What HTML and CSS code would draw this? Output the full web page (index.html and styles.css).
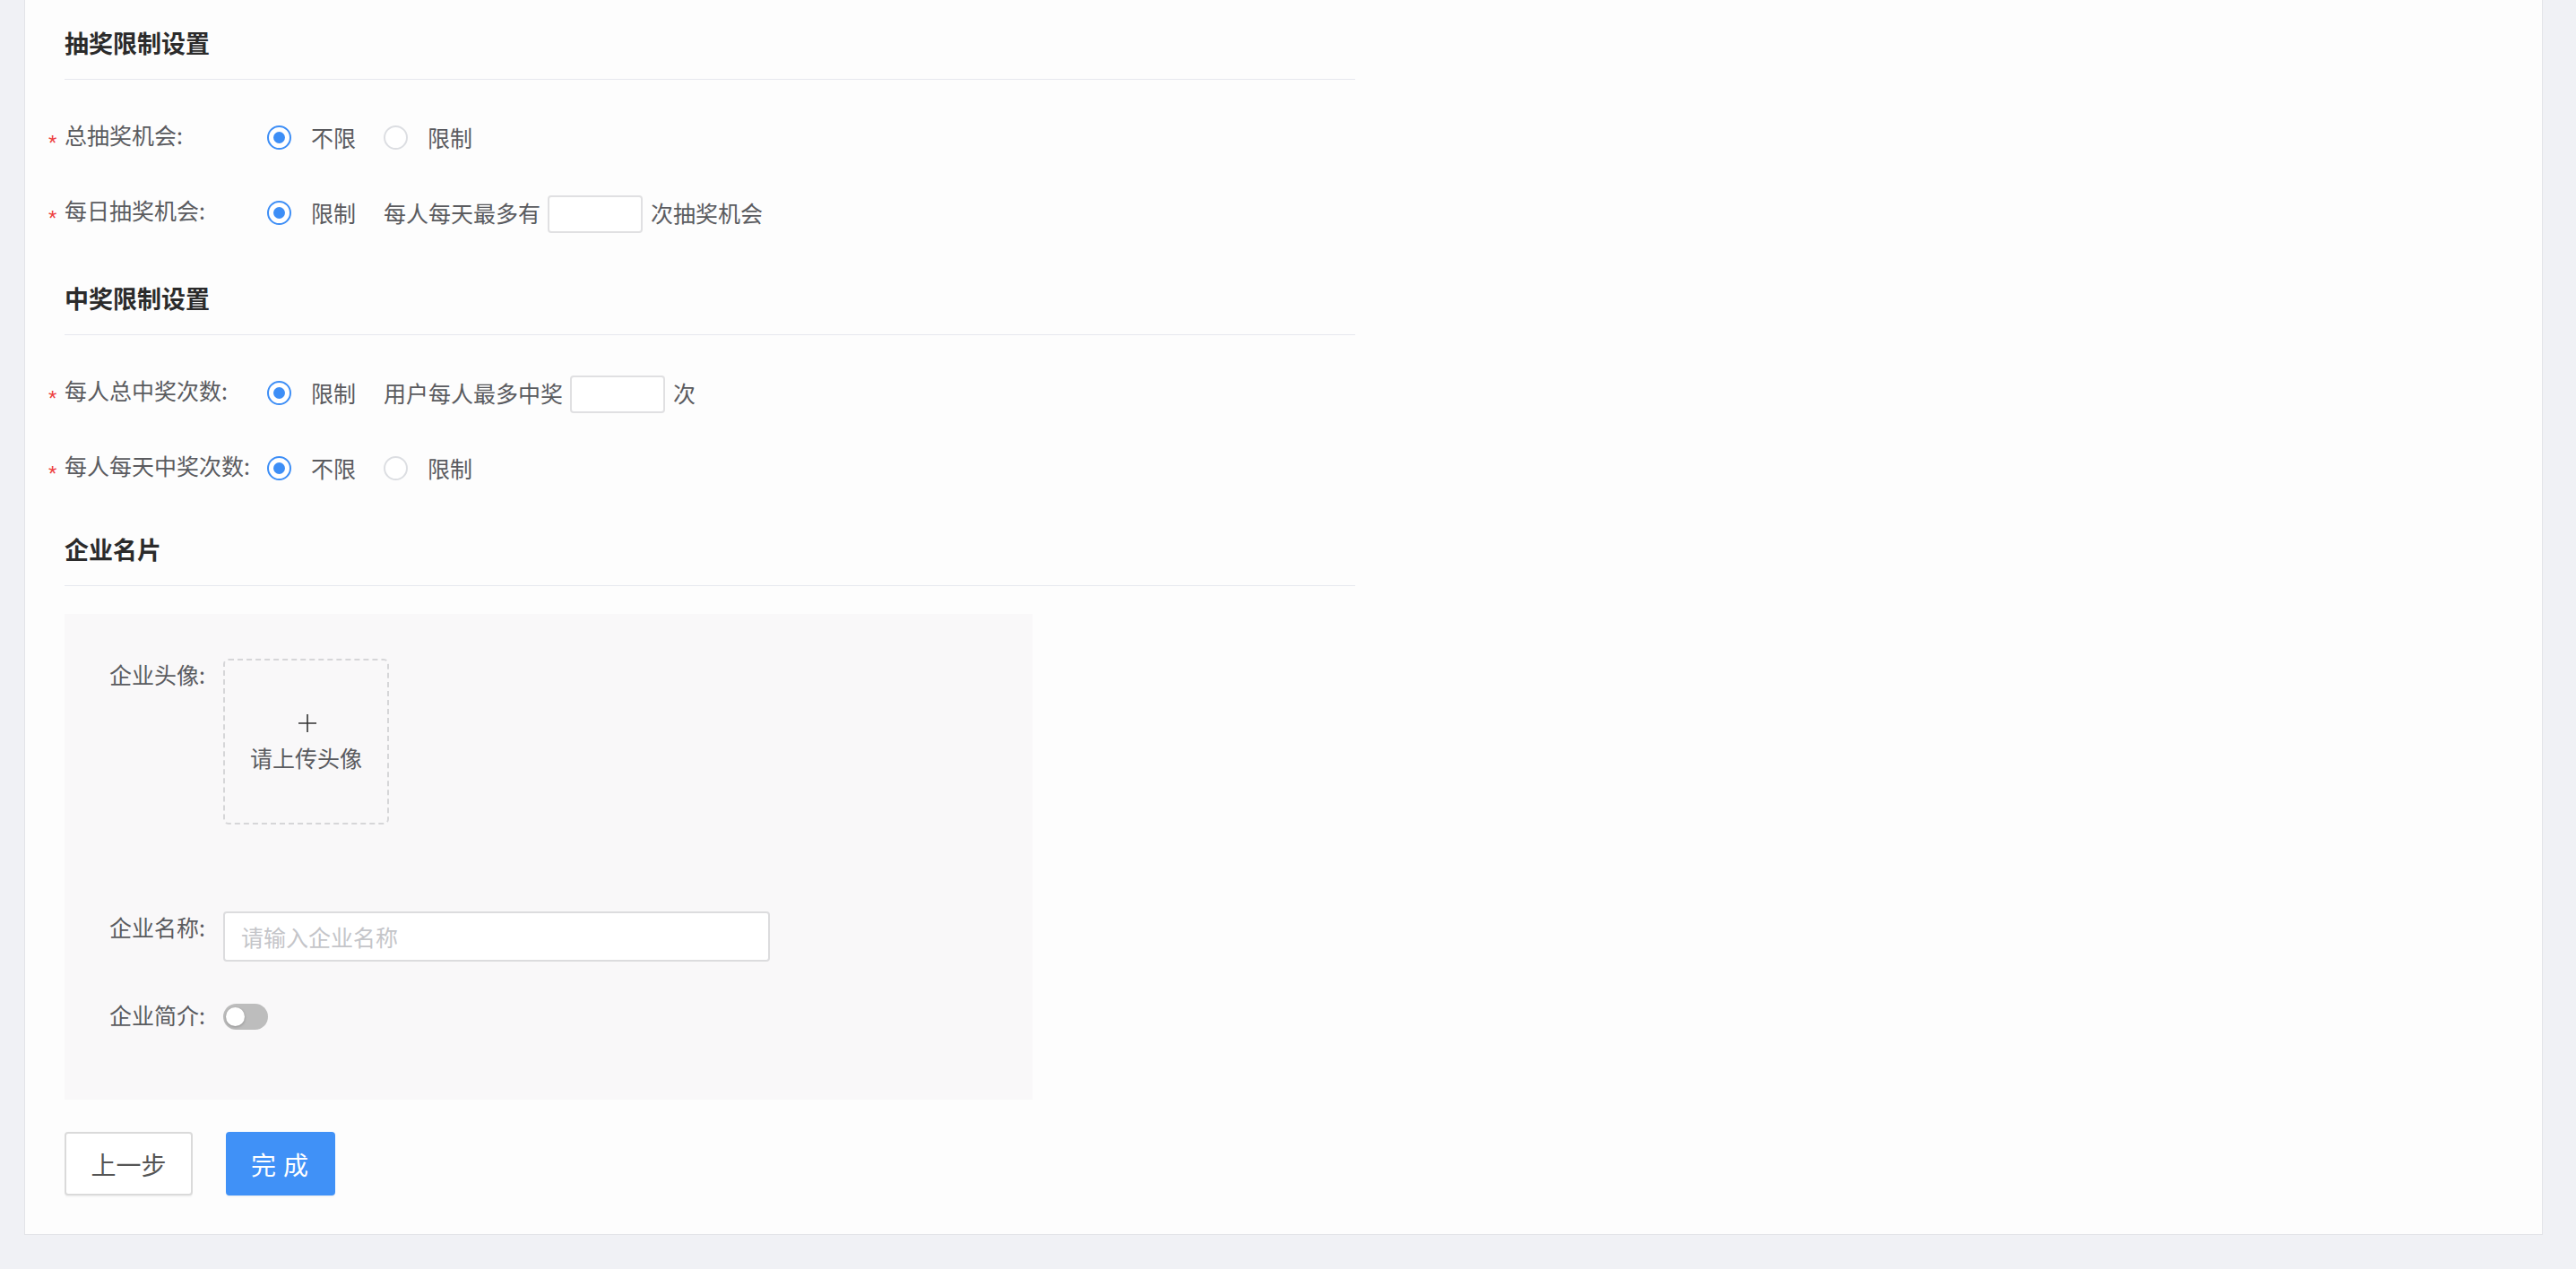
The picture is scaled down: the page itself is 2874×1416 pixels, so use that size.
FILE: index.html
```html
<!DOCTYPE html>
<html>
<head>
<meta charset="utf-8">
<link rel="stylesheet" href="styles.css">
</head>
<body>

<div class="page">
<div class="card">

  <div class="section">
    <h3 class="section-title">抽奖限制设置</h3>
    <div class="form-row">
      <label class="form-label"><span class="req">*</span>总抽奖机会:</label>
      <div class="form-control">
        <span class="radio-item"><span class="radio is-checked"></span>不限</span>
        <span class="radio-item"><span class="radio"></span>限制</span>
      </div>
    </div>
    <div class="form-row">
      <label class="form-label"><span class="req">*</span>每日抽奖机会:</label>
      <div class="form-control">
        <span class="radio-item"><span class="radio is-checked"></span>限制</span>
        <span>每人每天最多有</span><input class="num-input" type="text"><span>次抽奖机会</span>
      </div>
    </div>
  </div>

  <div class="section section-win">
    <h3 class="section-title">中奖限制设置</h3>
    <div class="form-row">
      <label class="form-label"><span class="req">*</span>每人总中奖次数:</label>
      <div class="form-control">
        <span class="radio-item"><span class="radio is-checked"></span>限制</span>
        <span>用户每人最多中奖</span><input class="num-input" type="text"><span>次</span>
      </div>
    </div>
    <div class="form-row">
      <label class="form-label"><span class="req">*</span>每人每天中奖次数:</label>
      <div class="form-control">
        <span class="radio-item"><span class="radio is-checked"></span>不限</span>
        <span class="radio-item"><span class="radio"></span>限制</span>
      </div>
    </div>
  </div>

  <div class="section section-card">
    <h3 class="section-title">企业名片</h3>
    <div class="profile-box">
      <div class="box-row">
        <label class="box-label">企业头像:</label>
        <div class="upload">
          <svg class="upload-plus" width="22" height="22" viewBox="0 0 22 22">
            <path d="M11 1 V21 M1 11 H21" stroke="#333" stroke-width="1.6" fill="none"/>
          </svg>
          <span class="upload-text">请上传头像</span>
        </div>
      </div>
      <div class="box-row row-name">
        <label class="box-label">企业名称:</label>
        <input class="text-input" type="text" placeholder="请输入企业名称">
      </div>
      <div class="box-row row-intro">
        <label class="box-label">企业简介:</label>
        <span class="switch"><span class="switch-knob"></span></span>
      </div>
    </div>
  </div>

  <div class="actions">
    <button class="btn">上一步</button>
    <button class="btn btn-primary">完成</button>
  </div>

</div>
</div>

</body>
</html>
```

FILE: styles.css
```css
* {
  box-sizing: border-box;
}

body {
  margin: 0;
  background: #f0f1f5;
  font-family: "Noto Sans CJK SC", "Noto Sans", sans-serif;
}

.page {
  padding: 0 37px 39px 27px;
}

.card {
  background: #fdfdfd;
  border: 1px solid #e3e4e8;
  border-top: none;
  padding: 28px 44px 43px;
}

.section-title {
  width: 1440px;
  margin: 0;
  font-size: 27px;
  font-weight: bold;
  line-height: 40px;
  color: #2b2b2b;
  padding-bottom: 20px;
  border-bottom: 1px solid #e6e8ee;
}

.section-win {
  margin-top: 48px;
}

.section-card {
  margin-top: 43px;
}

.form-row {
  display: flex;
  align-items: center;
  height: 56px;
  margin-top: 28px;
  font-size: 25px;
  color: #5a5b5f;
}

.section-title + .form-row {
  margin-top: 36px;
}

.form-label {
  width: 226px;
  flex-shrink: 0;
  white-space: nowrap;
}

.req {
  display: inline-block;
  width: 18px;
  margin-left: -18px;
  color: #ed3f3f;
  font-family: "Liberation Sans", sans-serif;
  font-size: 24px;
  vertical-align: -7px;
}

.form-control {
  display: flex;
  align-items: center;
  white-space: nowrap;
}

.radio-item {
  display: inline-flex;
  align-items: center;
  margin-right: 31px;
}

.radio {
  width: 27px;
  height: 27px;
  border: 2px solid #dcdee2;
  border-radius: 50%;
  margin-right: 22px;
  display: inline-flex;
  align-items: center;
  justify-content: center;
  background: #fff;
}

.radio.is-checked {
  border-color: #3d8ef6;
}

.radio.is-checked::after {
  content: "";
  width: 13px;
  height: 13px;
  border-radius: 50%;
  background: #3d8ef6;
}

.num-input {
  width: 106px;
  height: 42px;
  margin: 4px 9px 0 8px;
  border: 2px solid #e0e0e2;
  border-radius: 4px;
  background: #fff;
  outline: none;
}

.profile-box {
  width: 1080px;
  margin-top: 31px;
  background: #f9f8f9;
  padding: 50px 0 78px 50px;
}

.box-row {
  display: flex;
  align-items: flex-start;
}

.box-label {
  width: 127px;
  flex-shrink: 0;
  font-size: 25px;
  line-height: 34px;
  color: #5a5b5f;
}

.upload {
  width: 185px;
  height: 185px;
  border: 2px dashed #d6d6d8;
  border-radius: 6px;
  display: flex;
  flex-direction: column;
  align-items: center;
  justify-content: center;
}

.upload-plus {
  display: block;
  margin-left: 2px;
}

.upload-text {
  margin-top: 12px;
  font-size: 25px;
  line-height: 30px;
  color: #5a5b5f;
}

.row-name {
  margin-top: 97px;
}

.text-input {
  width: 610px;
  height: 56px;
  border: 2px solid #dcdcde;
  border-radius: 4px;
  background: #fff;
  padding: 0 18px;
  font-family: inherit;
  font-size: 25px;
  outline: none;
}

.text-input::placeholder {
  color: #c4c5c9;
}

.row-intro {
  margin-top: 42px;
}

.switch {
  width: 50px;
  height: 29px;
  margin-top: 5px;
  border-radius: 15px;
  background: #bdbdbd;
  display: flex;
  align-items: center;
  padding-left: 3px;
}

.switch-knob {
  width: 21px;
  height: 21px;
  border-radius: 50%;
  background: #fff;
  box-shadow: 0 1px 3px rgba(0, 0, 0, 0.25);
}

.actions {
  display: flex;
  gap: 37px;
  margin-top: 36px;
}

.btn {
  height: 71px;
  width: 143px;
  border: 2px solid #dadada;
  border-radius: 4px;
  background: #fff;
  font-family: inherit;
  font-size: 28px;
  color: #555;
  box-shadow: 0 2px 0 rgba(0, 0, 0, 0.03);
}

.btn-primary {
  width: 122px;
  border-color: #4091f7;
  background: #4091f7;
  color: #fff;
  letter-spacing: 8px;
  padding-left: 12px;
}
```
